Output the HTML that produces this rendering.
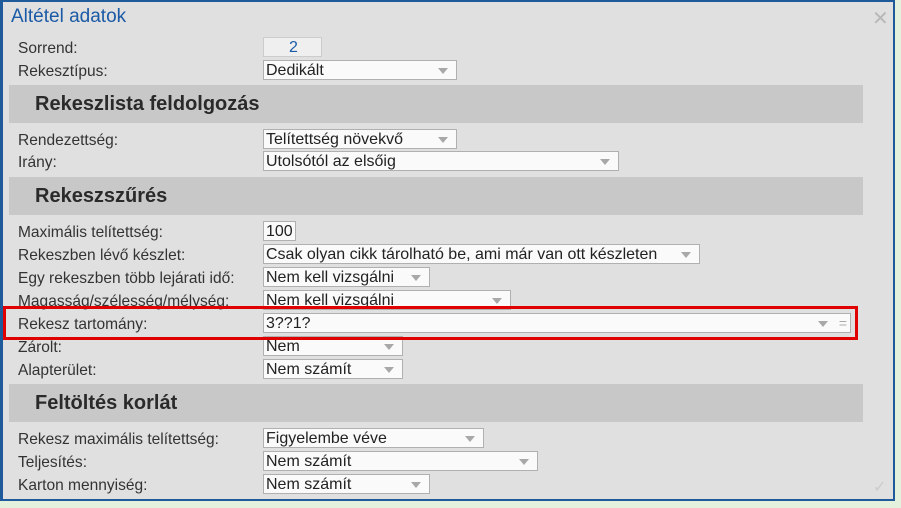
<!DOCTYPE html>
<html><head><meta charset="utf-8"><style>
*{margin:0;padding:0;box-sizing:border-box}
body{width:901px;height:508px;background:#e4f1dc;position:relative;overflow:hidden;font-family:"Liberation Sans",sans-serif}
#win{position:absolute;left:0;top:0;width:895px;height:501px;background:#e0e0e0;border:2px solid #1f5a9a;border-left-width:3px}
.t{position:absolute;left:11px;top:6px;font-size:19px;color:#1a5aa6}
.x{position:absolute;left:872px;top:6px;font-size:20px;color:#b8b8b8}
.l{position:absolute;left:18px;font-size:16px;color:#333;transform:scaleX(0.97) translateY(2px);transform-origin:left}
.f{position:absolute;left:263px;height:20px;background:#fafafa;border:1px solid #b0b0b0;font-size:16px;color:#222;padding-left:2px;line-height:19px;white-space:nowrap}
.f .a{position:absolute;right:8px;top:7px;width:0;height:0;border-left:5px solid transparent;border-right:5px solid transparent;border-top:6px solid #a8a8a8}
.h{position:absolute;left:9px;width:854px;height:38px;background:#c8c8c8;font-weight:bold;font-size:20px;color:#2a2a2a;padding-left:26px;line-height:38px}
.red{position:absolute;left:3px;top:306px;width:855px;height:34px;border:3px solid #e00000}
</style></head><body>
<div id="win"></div>
<div class="t">Altétel adatok</div>
<div class="x">✕</div>

<div class="l" style="top:38px">Sorrend:</div>
<div class="f" style="top:37px;width:59px;text-align:center;color:#1a5aa6;background:#efefef;border-color:#ccc">2</div>
<div class="l" style="top:61px">Rekesztípus:</div>
<div class="f" style="top:60px;width:194px">Dedikált<span class="a"></span></div>

<div class="h" style="top:85px">Rekeszlista feldolgozás</div>
<div class="l" style="top:130px">Rendezettség:</div>
<div class="f" style="top:129px;width:194px">Telítettség növekvő<span class="a"></span></div>
<div class="l" style="top:152px">Irány:</div>
<div class="f" style="top:151px;width:356px">Utolsótól az elsőig<span class="a"></span></div>

<div class="h" style="top:177px">Rekeszszűrés</div>
<div class="l" style="top:222px">Maximális telítettség:</div>
<div class="f" style="top:221px;width:33px">100</div>
<div class="l" style="top:245px">Rekeszben lévő készlet:</div>
<div class="f" style="top:244px;width:437px">Csak olyan cikk tárolható be, ami már van ott készleten<span class="a"></span></div>
<div class="l" style="top:268px">Egy rekeszben több lejárati idő:</div>
<div class="f" style="top:267px;width:167px">Nem kell vizsgálni<span class="a"></span></div>
<div class="l" style="top:291px">Magasság/szélesség/mélység:</div>
<div class="f" style="top:290px;width:248px">Nem kell vizsgálni<span class="a"></span></div>
<div class="l" style="top:314px">Rekesz tartomány:</div>
<div class="f" style="top:313px;width:588px">3??1?<span class="a" style="right:22px"></span><span style="position:absolute;right:3px;top:0;color:#aaa;font-size:14px">=</span></div>
<div class="l" style="top:337px">Zárolt:</div>
<div class="f" style="top:336px;width:140px">Nem<span class="a"></span></div>
<div class="l" style="top:360px">Alapterület:</div>
<div class="f" style="top:359px;width:140px">Nem számít<span class="a"></span></div>
<div class="red"></div>

<div class="h" style="top:384px">Feltöltés korlát</div>
<div class="l" style="top:429px">Rekesz maximális telítettség:</div>
<div class="f" style="top:428px;width:221px">Figyelembe véve<span class="a"></span></div>
<div class="l" style="top:452px">Teljesítés:</div>
<div class="f" style="top:451px;width:275px">Nem számít<span class="a"></span></div>
<div class="l" style="top:475px">Karton mennyiség:</div>
<div class="f" style="top:474px;width:167px">Nem számít<span class="a"></span></div>
<div style="position:absolute;left:873px;top:477px;color:#ccc;font-size:16px">✓</div>
</body></html>
